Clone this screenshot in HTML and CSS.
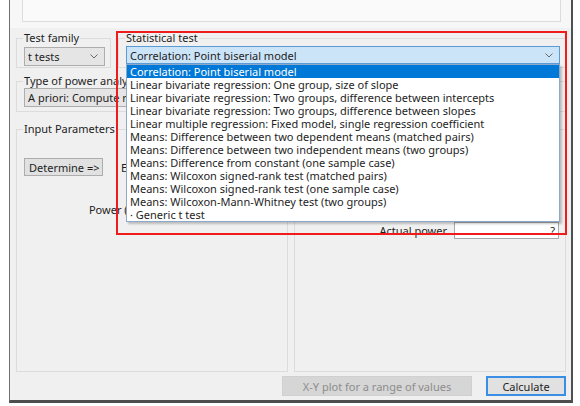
FILE: index.html
```html
<!DOCTYPE html>
<html lang="en">
<head>
    <meta charset="UTF-8">
    <title>G*Power</title>
    <link rel="stylesheet" href="styles.css">
</head>
<body>
    <div class="window">
        <div class="top-pane">
            <div class="log-field"></div>
        </div>

        <div class="content">
            <div class="row-test">
                <div class="group group-family">
                    <div class="group-title">Test family</div>
                    <div class="combo combo-family">
                        <span>t tests</span>
                        <svg class="chevron" width="8" height="5" viewBox="0 0 8 5"><path d="M0.5 0.5 L4 4 L7.5 0.5" fill="none" stroke="#6a6a6a" stroke-width="1"/></svg>
                    </div>
                </div>
                <div class="group group-stat">
                    <div class="group-title">Statistical test</div>
                    <div class="combo-wrap">
                        <div class="combo combo-focus">
                            <span>Correlation: Point biserial model</span>
                            <svg class="chevron" width="8" height="5" viewBox="0 0 8 5"><path d="M0.5 0.5 L4 4 L7.5 0.5" fill="none" stroke="#6a6a6a" stroke-width="1"/></svg>
                        </div>
                        <ul class="dropdown">
                            <li class="selected">Correlation: Point biserial model</li>
                            <li>Linear bivariate regression: One group, size of slope</li>
                            <li>Linear bivariate regression: Two groups, difference between intercepts</li>
                            <li>Linear bivariate regression: Two groups, difference between slopes</li>
                            <li>Linear multiple regression: Fixed model, single regression coefficient</li>
                            <li>Means: Difference between two dependent means (matched pairs)</li>
                            <li>Means: Difference between two independent means (two groups)</li>
                            <li>Means: Difference from constant (one sample case)</li>
                            <li>Means: Wilcoxon signed-rank test (matched pairs)</li>
                            <li>Means: Wilcoxon signed-rank test (one sample case)</li>
                            <li>Means: Wilcoxon-Mann-Whitney test (two groups)</li>
                            <li>· Generic t test</li>
                        </ul>
                    </div>
                </div>
            </div>

            <div class="group group-type">
                <div class="group-title">Type of power analysis</div>
                <div class="combo combo-type">
                    <span>A priori: Compute required sample size - given α, power, and effect size</span>
                </div>
            </div>

            <div class="params">
                <div class="group group-params">
                    <div class="group-title">Input Parameters</div>
                    <div class="param-grid input-grid">
                        <div class="param-label wide">Tail(s)</div>
                        <div class="field"></div>
                        <button class="btn btn-determine">Determine =&gt;</button>
                        <div class="param-label effect-label">Effect size |ρ|</div>
                        <div class="field"></div>
                        <div class="param-label wide">α err prob</div>
                        <div class="field"></div>
                        <div class="param-label wide">Power (1-β err prob)</div>
                        <div class="field"></div>
                    </div>
                </div>
                <div class="group group-params">
                    <div class="group-title">Output Parameters</div>
                    <div class="param-grid output-grid">
                        <div class="param-label">Noncentrality parameter δ</div>
                        <div class="field"></div>
                        <div class="param-label">Critical t</div>
                        <div class="field"></div>
                        <div class="param-label">Df</div>
                        <div class="field"></div>
                        <div class="param-label">Total sample size</div>
                        <div class="field"></div>
                        <div class="param-label">Actual power</div>
                        <div class="field">?</div>
                    </div>
                </div>
            </div>

            <div class="actions">
                <button class="btn btn-plot" disabled>X-Y plot for a range of values</button>
                <button class="btn btn-calc">Calculate</button>
            </div>
        </div>

        <div class="highlight"></div>
    </div>
</body>
</html>
```

FILE: styles.css
```css
body {
    margin: 0;
    background: #fff;
    font-family: "Noto Sans", "Open Sans", sans-serif;
    font-size: 11px;
    color: #1e1e1e;
}
.window {
    position: relative;
    width: 564px;
    height: 403px;
    margin-left: 9px;
    box-sizing: border-box;
    background: #f0f0f0;
    border-left: 1px solid #707070;
    border-right: 2px solid #505050;
    border-bottom: 3px solid #4d4d4d;
}
.top-pane {
    height: 28px;
    padding: 0 10px 0 12px;
    box-sizing: border-box;
    background: #f7f7f7;
}
.log-field {
    height: 22px;
    box-sizing: border-box;
    background: #fafafa;
    border: 1px solid #dcdcdc;
    border-top: 0;
}
.content {
    padding: 10px 5px 0 6px;
}

/* group boxes */
.group {
    border: 1px solid #dcdcdc;
    box-sizing: border-box;
}
.group-title {
    width: fit-content;
    margin: -8px 0 0 -1px;
    padding: 0 1px;
    line-height: 14px;
    background: #f0f0f0;
}
.row-test {
    display: flex;
    gap: 7px;
}
.group-family {
    width: 95px;
    height: 30px;
    padding: 0 5px 0 7px;
}
.group-stat {
    flex: 1;
    height: 30px;
    padding: 0 5px 0 7px;
}
.group-type {
    height: 31px;
    margin-top: 13px;
    padding: 0 5px 0 7px;
}

/* combo boxes */
.combo {
    display: flex;
    align-items: center;
    justify-content: space-between;
    height: 19px;
    padding: 0 6px 0 3px;
    box-sizing: border-box;
    background: #e5e5e5;
    border: 1px solid #adadad;
    white-space: nowrap;
    overflow: hidden;
}
.combo-family {
    margin-top: 2px;
}
.combo-wrap {
    position: relative;
    margin-top: 1px;
}
.combo-focus {
    height: 18px;
    background: #cce4f7;
    border-color: #5b9bd5;
}
.chevron {
    flex: none;
}
.dropdown {
    position: absolute;
    top: 100%;
    left: 0;
    right: 0;
    z-index: 2;
    margin: 0;
    padding: 0;
    list-style: none;
    background: #fff;
    border: 1px solid #8ea8c8;
    box-shadow: 2px 2px 2px rgba(0, 0, 0, 0.22);
}
.dropdown li {
    height: 13px;
    line-height: 13px;
    padding-left: 3px;
    white-space: nowrap;
}
.dropdown .selected {
    background: #0078d7;
    color: #fff;
}

/* parameters */
.params {
    display: grid;
    grid-template-columns: repeat(2, minmax(0, 1fr));
    gap: 6px;
    margin-top: 17px;
}
.group-params {
    height: 243px;
    padding: 0 6px 0 7px;
}
.param-grid {
    display: grid;
    grid-auto-rows: 17px;
    row-gap: 4px;
    padding-top: 2px;
}
.input-grid {
    grid-template-columns: 79px minmax(0, 1fr) 82px;
    column-gap: 6px;
}
.input-grid .param-label {
    grid-column: 2;
}
.input-grid .wide {
    grid-column: 1 / 3;
}
.input-grid .effect-label {
    padding-left: 12px;
    text-align: left;
}
.btn-determine {
    grid-column: 1;
    grid-row: 2;
    height: 18px;
    margin-top: -1px;
    white-space: nowrap;
}
.output-grid {
    grid-template-columns: minmax(0, 1fr) 105px;
    column-gap: 7px;
}
.param-label {
    line-height: 17px;
    text-align: right;
    white-space: nowrap;
}
.field {
    line-height: 15px;
    padding-right: 3px;
    text-align: right;
    background: #fff;
    border: 1px solid #a9a9a9;
}

/* buttons */
.btn {
    font: inherit;
    color: #1e1e1e;
    background: #e1e1e1;
    border: 1px solid #adadad;
    padding: 0 4px;
    text-align: left;
}
.actions {
    display: flex;
    justify-content: flex-end;
    gap: 14px;
    margin-top: 4px;
}
.btn-plot {
    width: 190px;
    height: 20px;
    text-align: center;
    color: #8d8d8d;
    background: #d6d6d6;
    border-color: #d0d0d0;
}
.btn-calc {
    width: 80px;
    height: 20px;
    text-align: center;
    border: 2px solid #3a8ee6;
}

/* annotation frame */
.highlight {
    position: absolute;
    left: 106px;
    top: 31px;
    width: 451px;
    height: 204px;
    z-index: 3;
    box-sizing: border-box;
    border: 2px solid #f01c1c;
}
```
